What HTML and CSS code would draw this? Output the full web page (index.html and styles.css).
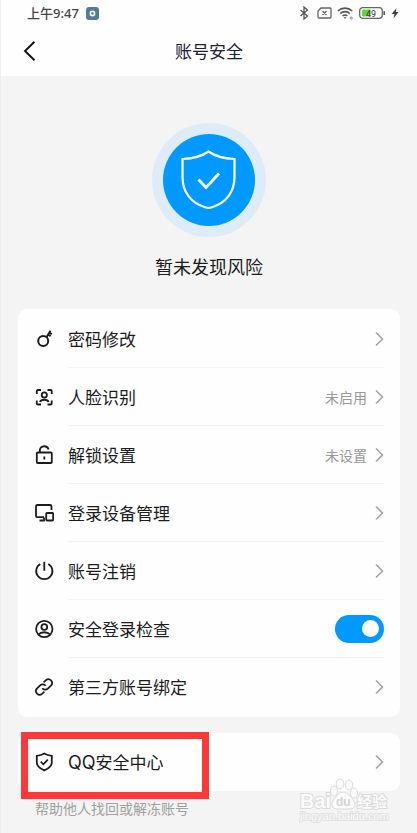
FILE: index.html
```html
<!DOCTYPE html>
<html lang="zh-CN">

<head>
	<meta charset="utf-8">
	<title>账号安全</title>
	<meta name="viewport" content="width=device-width, initial-scale=1">
	<link rel="stylesheet" href="styles.css">
</head>

<body>
	<!-- reused by every row -->
	<svg class="defs" width="0" height="0" aria-hidden="true">
		<symbol id="chevron" viewBox="0 0 10 16">
			<path d="M2 1.500L8.500 8 2 14.500" fill="none" stroke="#a4a4a4" stroke-width="1.6" />
		</symbol>
	</svg>

	<header class="top">
		<div class="status">
			<span class="status__time">上午9:47</span>
			<svg width="13" height="13" viewBox="0 0 13 13">
				<rect width="13" height="13" rx="3" fill="#547c96" />
				<circle cx="6.5" cy="6.5" r="2.1" fill="#547c96" stroke="#fff" stroke-width="1.6" />
			</svg>
			<div class="status__icons">
				<svg width="10" height="14" viewBox="0 0 10 14" fill="none" stroke="#555" stroke-width="1.3">
					<path d="M1.500 4l7 6L5 13V1l3.500 3-7 6" />
				</svg>
				<svg width="15" height="12" viewBox="0 0 15 12" fill="none" stroke="#666" stroke-width="1.3">
					<path d="M4 1h9a1 1 0 0 1 1 1v8a1 1 0 0 1-1 1H2a1 1 0 0 1-1-1V4zM5.500 4l4 4m0-4l-4 4" />
				</svg>
				<svg width="17" height="14" viewBox="0 0 17 14" fill="none" stroke="#555" stroke-width="1.6">
					<path d="M.8 5a10.500 10.500 0 0 1 14.400 0M3.200 7.500a7 7 0 0 1 9.600 0M5.600 10a3.700 3.700 0 0 1 4.800 0" />
					<path d="M6.500 11.200h3L8 13z" fill="#555" stroke="none" />
					<circle cx="14.200" cy="12" r="1.100" stroke="#888" stroke-width="1" />
				</svg>
				<svg width="27" height="12" viewBox="0 0 27 12">
					<rect x=".7" y=".7" width="22.600" height="10.600" rx="3" fill="#fff" stroke="#666" stroke-width="1.300" />
					<path d="M4 2.500h7.500v7H4a1 1 0 0 1-1-1v-5a1 1 0 0 1 1-1z" fill="#62d43c" />
					<path d="M25.200 4v4" stroke="#666" stroke-width="1.600" />
					<text class="status__level" x="12" y="9.500" text-anchor="middle">49</text>
				</svg>
				<svg width="8" height="12" viewBox="0 0 8 12">
					<path d="M5.500 1L.6 7h2.900L2.500 11.500 7.600 5H4.800z" fill="#444" />
				</svg>
			</div>
		</div>
		<nav class="nav">
			<button class="nav__back" type="button" aria-label="返回">
				<svg width="14" height="22" viewBox="0 0 14 22" fill="none" stroke="#111" stroke-width="1.900">
					<path d="M11.500 1.800L2 11l9.500 9.200" />
				</svg>
			</button>
			<h1 class="nav__title">账号安全</h1>
		</nav>
	</header>

	<main>
		<section class="hero">
			<div class="hero__ring">
				<div class="hero__disc">
					<svg width="60" height="62" viewBox="0 0 60 62" fill="none" stroke="#fff">
						<path d="M29.500 2.500C35.500 6.800 44.500 9.500 55.500 10v18c0 15-8.500 26-22.500 30.200Q29.500 59.500 26 58.200C12 54 3.500 43 3.500 28V10c11-.5 20-3.200 26-7.500z" stroke-width="2.200" />
						<path d="M19.500 30.500l7.500 8 13-14" stroke-width="2.800" />
					</svg>
				</div>
			</div>
			<p class="hero__text">暂未发现风险</p>
		</section>

		<ul class="card">
			<li>
				<a class="row" href="#">
					<svg class="row__icon" viewBox="0 0 20 20">
						<circle cx="9.200" cy="12" r="5" stroke-width="2" />
						<path d="M12.300 8.500L16.500 1.800M14 5.500l2.600 1.700M15.200 3.500l2.600 1.700" stroke-width="2" />
					</svg>
					<span class="row__body">
						<span class="row__label">密码修改</span>
						<svg class="row__arrow"><use href="#chevron" /></svg>
					</span>
				</a>
			</li>
			<li>
				<a class="row" href="#">
					<svg class="row__icon" viewBox="0 0 20 20">
						<path d="M2.800 7V4a1 1 0 0 1 1-1H7M13.500 3h3.200a1 1 0 0 1 1 1v3M17.700 13.500v3a1 1 0 0 1-1 1h-3.200M7 17.500H3.800a1 1 0 0 1-1-1v-3" />
						<circle cx="10.300" cy="8" r="2.600" />
						<path d="M6 15c1-3 7.600-3 8.600 0" />
					</svg>
					<span class="row__body">
						<span class="row__label">人脸识别</span>
						<span class="row__value">未启用</span>
						<svg class="row__arrow"><use href="#chevron" /></svg>
					</span>
				</a>
			</li>
			<li>
				<a class="row" href="#">
					<svg class="row__icon" viewBox="0 0 20 20">
						<rect x="2.800" y="7.500" width="15" height="10.500" rx="1" />
						<path d="M5.800 7.500V6a4.500 4.500 0 0 1 8.800-1.500M10.300 11.500v3" />
					</svg>
					<span class="row__body">
						<span class="row__label">解锁设置</span>
						<span class="row__value">未设置</span>
						<svg class="row__arrow"><use href="#chevron" /></svg>
					</span>
				</a>
			</li>
			<li>
				<a class="row" href="#">
					<svg class="row__icon" viewBox="0 0 20 20">
						<path d="M10 14.200H3.500a1.500 1.500 0 0 1-1.500-1.500V3.500A1.500 1.500 0 0 1 3.500 2H16a1.500 1.500 0 0 1 1.500 1.500V7M5.500 17.500H10v-3" />
						<rect x="12.200" y="10" width="7" height="7.500" rx="1" />
					</svg>
					<span class="row__body">
						<span class="row__label">登录设备管理</span>
						<svg class="row__arrow"><use href="#chevron" /></svg>
					</span>
				</a>
			</li>
			<li>
				<a class="row" href="#">
					<svg class="row__icon" viewBox="0 0 20 20">
						<path d="M6.300 3a8.100 8.100 0 1 0 8 0M10.300 .8v9" />
					</svg>
					<span class="row__body">
						<span class="row__label">账号注销</span>
						<svg class="row__arrow"><use href="#chevron" /></svg>
					</span>
				</a>
			</li>
			<li class="row">
				<svg class="row__icon" viewBox="0 0 20 20">
					<circle cx="10.300" cy="10" r="8.200" />
					<circle cx="10.300" cy="8" r="2.900" />
					<path d="M4.500 15.500c2.500-3 9-3 11.600 0" />
				</svg>
				<span class="row__body">
					<label class="row__label" for="login-check">安全登录检查</label>
					<input class="switch" id="login-check" type="checkbox" checked>
				</span>
			</li>
			<li>
				<a class="row" href="#">
					<svg class="row__icon" viewBox="0 0 24 24">
						<path d="M10 13.500a4.400 4.400 0 0 0 6.600.5l4-4a4.400 4.400 0 0 0-6.200-6.200L11.500 6.500" stroke-width="2.100" />
						<path d="M14 10.500a4.400 4.400 0 0 0-6.600-.5l-4 4a4.400 4.400 0 0 0 6.200 6.200l2.900-2.700" stroke-width="2.100" />
					</svg>
					<span class="row__body">
						<span class="row__label">第三方账号绑定</span>
						<svg class="row__arrow"><use href="#chevron" /></svg>
					</span>
				</a>
			</li>
		</ul>

		<div class="center">
			<div class="card card--single">
				<a class="row" href="#">
					<svg class="row__icon" viewBox="0 0 20 20">
						<path d="M10.300 1.600c2 1.300 4.500 2 7.500 2.200v6.700c0 3.500-3 6-7.500 7.900-4.500-1.900-7.500-4.400-7.500-7.900V3.800c3-.2 5.500-.9 7.500-2.200z" />
						<path d="M6.800 9.700l2.600 2.600 4.400-4.600" />
					</svg>
					<span class="row__body">
						<span class="row__label"><span class="latin">QQ</span>安全中心</span>
						<svg class="row__arrow"><use href="#chevron" /></svg>
					</span>
				</a>
			</div>
			<div class="highlight"></div>
			<svg class="watermark" width="92" height="50" viewBox="0 0 92 50">
				<g class="watermark__paw">
					<ellipse cx="35" cy="15" rx="3.500" ry="5" />
					<ellipse cx="41" cy="8" rx="3.800" ry="5" />
					<ellipse cx="50" cy="9" rx="3.800" ry="5" />
					<ellipse cx="55" cy="17" rx="3.500" ry="5" />
					<path d="M44 16c4 0 6 3 8.500 6 5 5 4 11-1 11H38c-6 0-7-6-2-11 2.500-3 4-6 8-6z" />
				</g>
				<text class="watermark__name" x="1" y="32">Bai</text>
				<text class="watermark__du" x="37" y="30">du</text>
				<text class="watermark__cn" x="58" y="31">经验</text>
				<text class="watermark__url" x="1" y="44">jingyan.baidu.com</text>
			</svg>
		</div>
		<p class="note">帮助他人找回或解冻账号</p>
	</main>
</body>

</html>
```
FILE: styles.css
```css
* {
	box-sizing: border-box;
}

body {
	margin: 0;
	min-height: 100vh;
	border-left: 1px solid #eee;
	font-family: 'Noto Sans CJK SC', sans-serif;
	color: #1c1c1e;
	background: #f4f4f4;
}

h1,
p,
ul {
	margin: 0;
	padding: 0;
	font-weight: 400;
}

ul {
	list-style: none;
}

.defs {
	position: absolute;
}

/* header */

.top {
	background: #fefefe;
}

.status {
	display: flex;
	align-items: center;
	gap: 7px;
	height: 26px;
	padding: 0 18px 0 26px;
}

.status__time {
	font-family: 'Noto Sans', 'Noto Sans CJK SC', sans-serif;
	font-size: 13px;
	font-weight: 500;
	line-height: 20px;
	color: #444;
}

.status__icons {
	display: flex;
	align-items: center;
	gap: 5px;
	margin-left: auto;
}

.status__icons svg:first-child {
	margin-right: 3px;
}

.status__level {
	font-family: Roboto, sans-serif;
	font-size: 9px;
	fill: #333;
}

.nav {
	display: grid;
	grid-template-columns: 36px 1fr 36px;
	align-items: center;
	height: 50px;
}

.nav__back {
	display: flex;
	justify-content: flex-end;
	padding: 0;
	border: 0;
	background: none;
}

.nav__title {
	font-size: 17px;
	line-height: 24px;
	text-align: center;
	color: #1b2035;
}

/* hero */

.hero {
	display: flex;
	flex-direction: column;
	align-items: center;
	padding: 47px 0 31px;
}

.hero__ring {
	padding: 11px;
	border-radius: 50%;
	background: #deecf8;
}

.hero__disc {
	display: flex;
	align-items: center;
	justify-content: center;
	width: 92px;
	height: 92px;
	border-radius: 50%;
	background: #0099ff;
}

.hero__text {
	margin-top: 17px;
	font-size: 18px;
	line-height: 24px;
}

/* cards */

.card {
	margin: 0 17px 16px;
	padding: 1px 0;
	border-radius: 9px;
	background: #fefefe;
}

.card--single {
	margin-bottom: 0;
	padding: 0;
}

.row {
	display: flex;
	align-items: center;
	gap: 14px;
	height: 58px;
	padding: 0 16px;
	color: inherit;
	text-decoration: none;
}

.row__icon {
	flex: none;
	width: 20px;
	height: 20px;
	fill: none;
	stroke: #1c1c1e;
	stroke-width: 1.8;
}

.row__body {
	display: flex;
	flex: 1;
	align-items: center;
	height: 58px;
	border-bottom: 1px solid #f2f3f3;
}

li:last-child .row__body,
.card--single .row__body {
	border-bottom: 0;
}

.row__label {
	flex: 1;
	font-size: 17px;
	line-height: 24px;
}

.latin {
	font-family: Inter, sans-serif;
	font-size: 18px;
}

.row__value {
	margin-right: 7px;
	font-size: 14px;
	line-height: 20px;
	color: #999;
}

.row__arrow {
	width: 10px;
	height: 16px;
}

.switch {
	display: flex;
	align-items: center;
	justify-content: flex-end;
	width: 49px;
	height: 28px;
	margin: 0;
	padding: 0 5px;
	border-radius: 14px;
	background: #ccc;
	-webkit-appearance: none;
	appearance: none;
}

.switch::before {
	content: '';
	width: 17px;
	height: 17px;
	border-radius: 50%;
	background: #fff;
}

.switch:checked {
	background: #0099ff;
}

/* security center */

.center {
	position: relative;
}

.highlight {
	position: absolute;
	top: -1px;
	left: 20px;
	width: 188px;
	height: 67px;
	border: 7px solid #fc3838;
	pointer-events: none;
}

.note {
	padding: 7px 34px;
	font-size: 14px;
	line-height: 20px;
	color: #a0a0a0;
}

/* watermark */

.watermark {
	position: absolute;
	top: 43px;
	right: 26px;
	fill: #fafafa;
	stroke: #dcdcdc;
	stroke-width: 1;
	font-family: 'Liberation Sans', 'Noto Sans CJK SC', sans-serif;
}

.watermark text {
	paint-order: stroke;
	stroke-width: 2;
}

.watermark__name {
	font-size: 20px;
	font-weight: 700;
}

.watermark .watermark__du {
	font-size: 12px;
	font-weight: 700;
	fill: #d4d4d4;
	stroke: none;
}

.watermark__cn {
	font-size: 15px;
	font-weight: 700;
}

.watermark .watermark__url {
	font-size: 11px;
	stroke: #e2e2e2;
}
```
